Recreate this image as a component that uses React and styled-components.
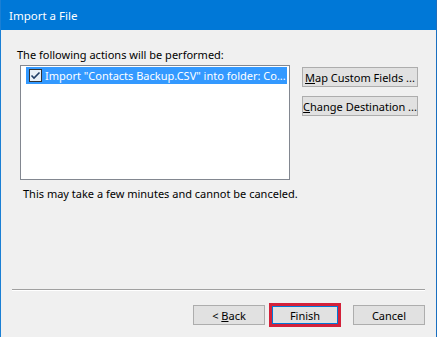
import React from "react";
import styled, { createGlobalStyle } from "styled-components";

const GlobalStyle = createGlobalStyle`
  html, body {
    margin: 0;
    padding: 0;
    background: #ffffff;
  }
  body {
    font-family: "Noto Sans", "Open Sans", "Liberation Sans", sans-serif;
    font-size: 11px;
  }
`;

export default function App() {
  return (
    <>
      <GlobalStyle />
      <Window>
        <TitleBar>Import a File</TitleBar>
        <Body>
          <Heading>The following actions will be performed:</Heading>
          <ActionRow>
            <ActionList>
              <ListItem>
                <CheckBox />
                <ItemText>Import "Contacts Backup.CSV" into folder: Co...</ItemText>
              </ListItem>
            </ActionList>
            <SideButtons>
              <Button $width={116}>
                <u>M</u>ap Custom Fields ...
              </Button>
              <Button $width={116}>
                <u>C</u>hange Destination ...
              </Button>
            </SideButtons>
          </ActionRow>
          <Note>This may take a few minutes and cannot be canceled.</Note>
        </Body>
        <Separator />
        <Footer>
          <Button $width={72}>
            &lt; <u>B</u>ack
          </Button>
          <Highlight>
            <Button $width={66} $height={18} $default>
              Finish
            </Button>
          </Highlight>
          <Button $width={72} $gap={8}>
            Cancel
          </Button>
        </Footer>
      </Window>
    </>
  );
}

function CheckBox() {
  return (
    <CheckIcon width="13" height="13" viewBox="0 0 13 13">
      <rect x="0.5" y="0.5" width="12" height="12" fill="#e8f0f8" stroke="#333333" />
      <path
        d="M2.5 6.5 L5 9 L10.5 3.5"
        fill="none"
        stroke="#1f3e66"
        strokeWidth="1.6"
      />
    </CheckIcon>
  );
}

const Window = styled.div`
  box-sizing: border-box;
  width: 437px;
  height: 337px;
  display: flex;
  flex-direction: column;
  background: #f0f0f0;
  border-left: 1px solid #1a7fd4;
  border-right: 1px solid #1a6fc0;
  color: #000000;
`;

const TitleBar = styled.div`
  height: 30px;
  flex-shrink: 0;
  display: flex;
  align-items: center;
  padding-left: 8px;
  background: #0078d7;
  color: #ffffff;
  font-size: 11.5px;
`;

const Body = styled.div`
  display: flex;
  flex-direction: column;
  padding: 17px 12px 0 16px;
`;

const Heading = styled.div`
  line-height: 16px;
  height: 16px;
`;

const ActionRow = styled.div`
  display: flex;
  align-items: flex-start;
  margin-top: 2px;
`;

const ActionList = styled.div`
  box-sizing: border-box;
  width: 270px;
  height: 115px;
  margin-left: 3px;
  padding: 1px 2px 0 5px;
  background: #ffffff;
  border: 1px solid #828790;
`;

const ListItem = styled.div`
  display: flex;
  align-items: center;
  height: 17px;
  padding-left: 3px;
  gap: 3px;
  background: #3399ff;
  color: #ffffff;
  white-space: nowrap;
  overflow: hidden;
`;

const CheckIcon = styled.svg`
  flex-shrink: 0;
  display: block;
`;

const ItemText = styled.span`
  line-height: 17px;
`;

const SideButtons = styled.div`
  display: flex;
  flex-direction: column;
  gap: 9px;
  margin-top: 2px;
  margin-left: 12px;
`;

const Button = styled.button`
  box-sizing: border-box;
  width: ${(p) => p.$width}px;
  height: ${(p) => p.$height || 20}px;
  margin-left: ${(p) => p.$gap || 0}px;
  padding: 0;
  font-family: inherit;
  font-size: 11px;
  color: #000000;
  background: #e1e1e1;
  border: 1px solid ${(p) => (p.$default ? "#0078d7" : "#adadad")};
  border-radius: 0;
  white-space: nowrap;
  u {
    text-decoration: underline;
  }
`;

const Note = styled.div`
  margin-top: 6px;
  margin-left: 6px;
  line-height: 16px;
`;

const Separator = styled.div`
  margin: auto 11px 0 11px;
  height: 1px;
  background: #a0a0a0;
  border-bottom: 1px solid #ffffff;
`;

const Footer = styled.div`
  display: flex;
  justify-content: flex-end;
  align-items: center;
  gap: 4px;
  padding: 12px 11px 10px 0;
`;

const Highlight = styled.div`
  box-sizing: border-box;
  display: flex;
  width: 72px;
  height: 24px;
  border: 3px solid #d3213a;
`;
